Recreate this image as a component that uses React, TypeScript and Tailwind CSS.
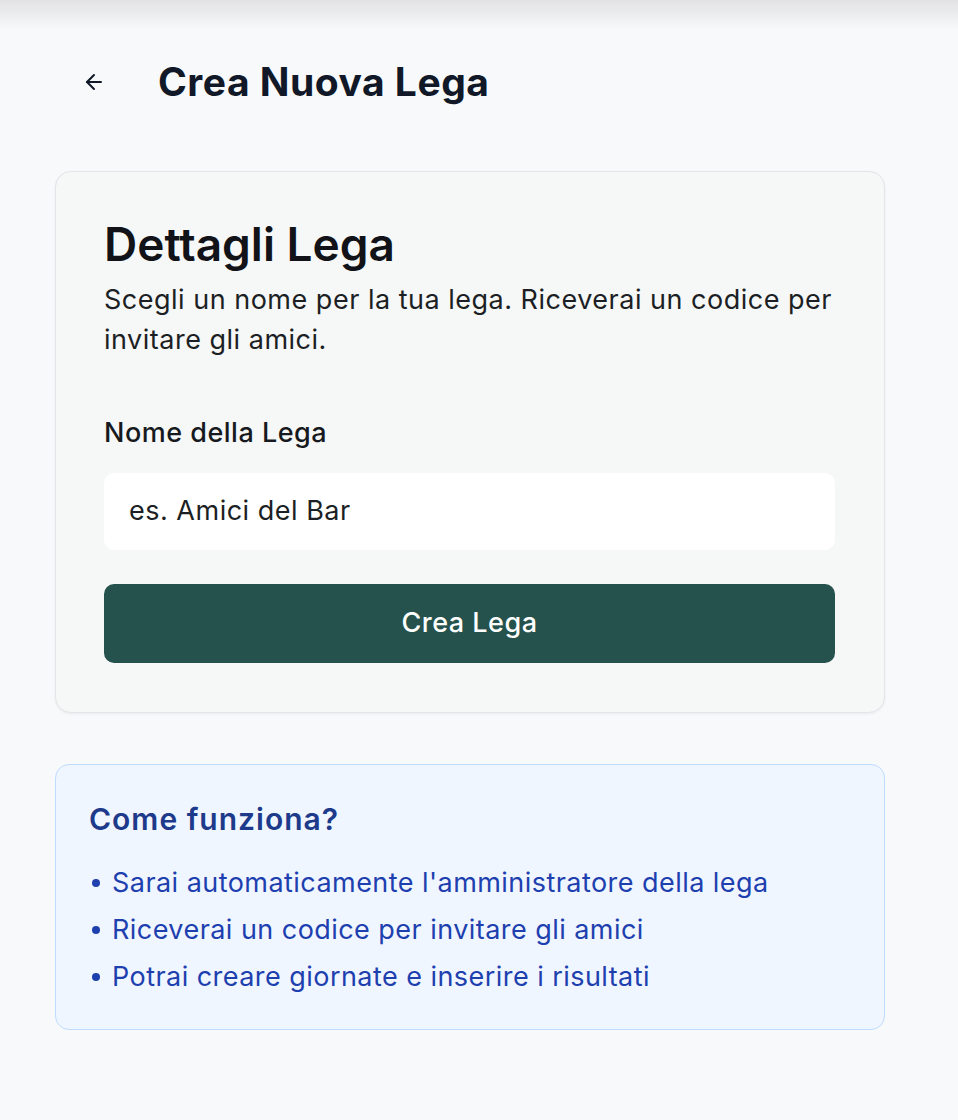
import React from "react";
import { ArrowLeft } from "lucide-react";

export default function App() {
  return (
    <div className="min-h-[1120px] bg-[#f8f9fb] relative flex flex-col font-['Inter',sans-serif] text-[#111827]">
      <div className="absolute top-0 left-0 right-0 h-[30px] bg-gradient-to-b from-[#e2e2e4] to-[#f8f9fb]" />
      <div className="relative ml-[55px] w-[830px] pt-[60px]">
        <div className="flex items-center h-[44px]">
          <button className="ml-[27px] text-[#111827]">
            <ArrowLeft size={24} strokeWidth={2} />
          </button>
          <h1 className="ml-[52px] text-[39px] font-bold leading-[44px] tracking-[0.5px]">
            Crea Nuova Lega
          </h1>
        </div>

        <div className="mt-[67px] rounded-[16px] border border-[#e1e6ea] bg-[#f6f7f7] shadow-[0_1px_3px_rgba(0,0,0,0.06)] pt-[46px] pb-[49px] pl-[48px] pr-[49px]">
          <h2 className="text-[46px] font-semibold leading-[52px] text-[#111318]">
            Dettagli Lega
          </h2>
          <p className="mt-[10px] text-[27px] leading-[40px] tracking-[0.5px] text-[#1c1f24]">
            Scegli un nome per la tua lega. Riceverai un codice per invitare gli amici.
          </p>
          <label className="block mt-[57px] text-[27px] font-medium leading-[32px] tracking-[0.5px] text-[#161a20]">
            Nome della Lega
          </label>
          <div className="mt-[24px] h-[77px] rounded-[10px] bg-white flex items-center pl-[25px] text-[27px] tracking-[0.5px] text-[#1c1f24]">
            es. Amici del Bar
          </div>
          <button className="mt-[34px] w-full h-[79px] rounded-[10px] bg-[#25524c] text-white text-[27px] font-medium tracking-[0.5px]">
            Crea Lega
          </button>
        </div>

        <div className="mt-[51px] rounded-[14px] border-[1.5px] border-[#bfdbfe] bg-[#eff6ff] pt-[36px] pb-[34px] pl-[33px] pr-[33px]">
          <h3 className="text-[30px] font-semibold leading-[36px] tracking-[1px] text-[#1e3a8a]">Come funziona?</h3>
          <ul className="mt-[28px] flex flex-col gap-[11px] text-[27px] leading-[36px] tracking-[0.45px] text-[#1e40af]">
            <li className="flex items-center"><span className="w-[23px] flex items-center"><span className="ml-[3px] w-[8px] h-[8px] rounded-full bg-[#1e40af]" /></span>Sarai automaticamente l'amministratore della lega</li>
            <li className="flex items-center"><span className="w-[23px] flex items-center"><span className="ml-[3px] w-[8px] h-[8px] rounded-full bg-[#1e40af]" /></span>Riceverai un codice per invitare gli amici</li>
            <li className="flex items-center"><span className="w-[23px] flex items-center"><span className="ml-[3px] w-[8px] h-[8px] rounded-full bg-[#1e40af]" /></span>Potrai creare giornate e inserire i risultati</li>
          </ul>
        </div>
      </div>
    </div>
  );
}
